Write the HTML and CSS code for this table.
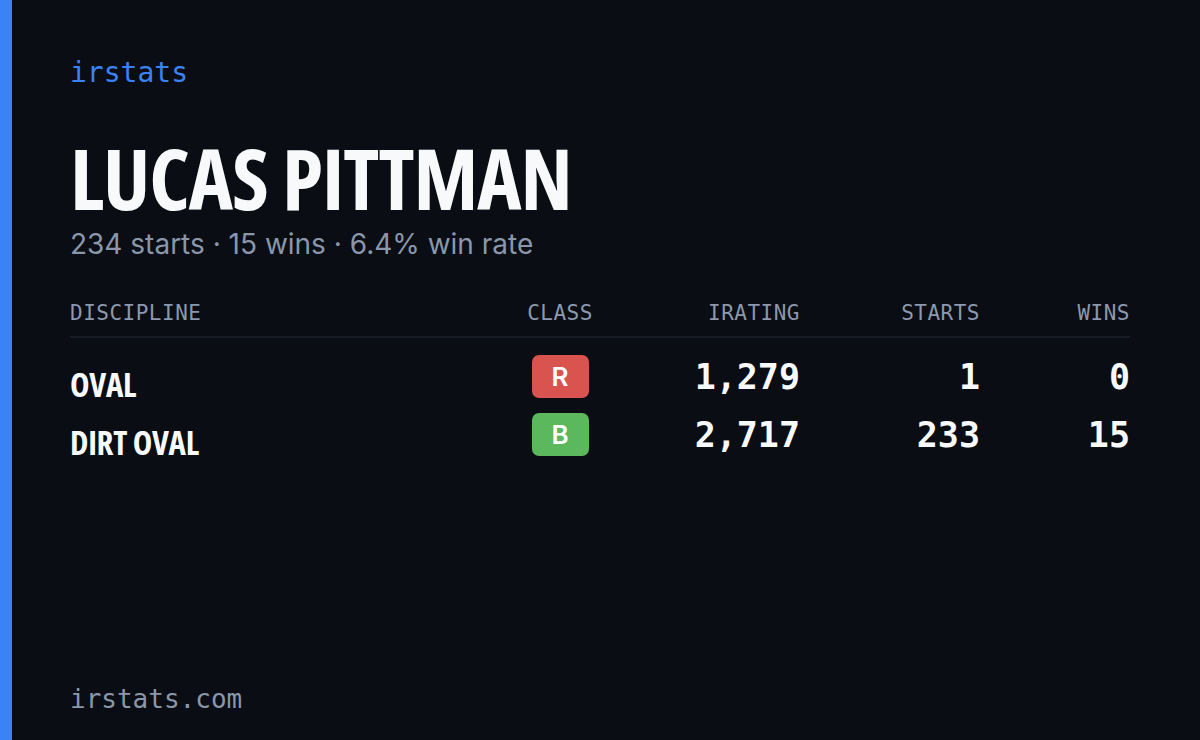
FILE: index.html
```html
<!DOCTYPE html>
<html>
<head>
<meta charset="utf-8">
<link rel="stylesheet" href="styles.css">
</head>
<body>
<div class="card">
  <div class="accent"></div>
  <main class="main">
    <div class="brand">irstats</div>
    <h1 class="name">LUCAS PITTMAN</h1>
    <div class="summary">234 starts · 15 wins · 6.4% win rate</div>
    <div class="table">
      <div class="row head">
        <div class="c-disc">DISCIPLINE</div>
        <div class="c-class">CLASS</div>
        <div class="c-num">IRATING</div>
        <div class="c-num">STARTS</div>
        <div class="c-num">WINS</div>
      </div>
      <div class="row data">
        <div class="c-disc disc">OVAL</div>
        <div class="c-class"><span class="badge red">R</span></div>
        <div class="c-num num">1,279</div>
        <div class="c-num num">1</div>
        <div class="c-num num">0</div>
      </div>
      <div class="row data">
        <div class="c-disc disc">DIRT OVAL</div>
        <div class="c-class"><span class="badge green">B</span></div>
        <div class="c-num num">2,717</div>
        <div class="c-num num">233</div>
        <div class="c-num num">15</div>
      </div>
    </div>
    <div class="footer">irstats.com</div>
  </main>
</div>
</body>
</html>
```

FILE: styles.css
```css
html, body {
  margin: 0;
  padding: 0;
  background: #0a0d14;
}
.card {
  display: flex;
  width: 1200px;
  height: 740px;
  background: #0a0d14;
  overflow: hidden;
}
.accent {
  width: 12px;
  flex: none;
  background: #3b82f6;
}
.main {
  flex: 1;
  display: flex;
  flex-direction: column;
  padding: 56px 70px 24px 58px;
}
.brand {
  font-family: "DejaVu Sans Mono", monospace;
  font-size: 28px;
  line-height: 34px;
  color: #3b82f6;
}
.name {
  margin: 50px 0 0 0;
  font-family: "Open Sans", sans-serif;
  font-stretch: 75%;
  font-weight: 700;
  font-size: 84px;
  line-height: 76px;
  color: #f8f9fb;
  letter-spacing: -1px;
}
.summary {
  margin-top: 11px;
  font-family: "Inter", sans-serif;
  font-size: 28px;
  line-height: 34px;
  color: #8a97ab;
}
.table {
  margin-top: 37px;
}
.row {
  display: grid;
  grid-template-columns: 1fr 130px 175px 180px 150px;
  align-items: center;
}
.head {
  font-family: "DejaVu Sans Mono", monospace;
  font-size: 21px;
  line-height: 30px;
  color: #8b98ad;
  letter-spacing: 0.5px;
  padding-bottom: 8px;
  border-bottom: 2px solid #171b25;
  margin-bottom: 8px;
}
.c-class {
  display: flex;
  justify-content: center;
}
.c-num {
  text-align: right;
}
.data {
  height: 58px;
}
.disc {
  font-family: "Open Sans", sans-serif;
  font-stretch: 75%;
  font-weight: 700;
  font-size: 33px;
  letter-spacing: -0.3px;
  color: #f8f9fb;
  padding-top: 16px;
}
.num {
  font-family: "DejaVu Sans Mono", monospace;
  font-weight: 700;
  font-size: 35px;
  color: #f8f9fb;
}
.badge {
  display: flex;
  align-items: center;
  justify-content: center;
  width: 57px;
  height: 43px;
  border-radius: 7px;
  font-family: "Inter", sans-serif;
  font-weight: 600;
  font-size: 26px;
  color: #ffffff;
}
.red { background: #d9534f; }
.green { background: #5cb85c; }
.footer {
  margin-top: auto;
  font-family: "DejaVu Sans Mono", monospace;
  font-size: 26px;
  line-height: 34px;
  color: #8a97ab;
}
```
